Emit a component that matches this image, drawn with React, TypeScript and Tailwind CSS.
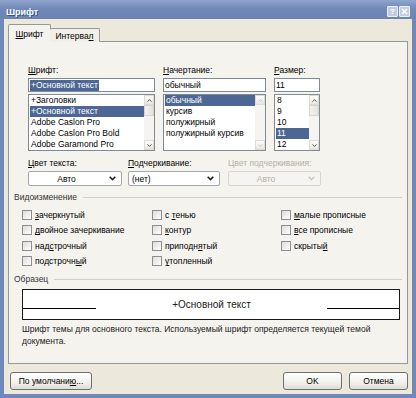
import React from "react";

const SEL = "bg-[#4d6795] text-white";

function U({ children }: { children: React.ReactNode }) {
  return <span className="underline decoration-[1px] underline-offset-[1px]">{children}</span>;
}

function Chevron({ disabled }: { disabled?: boolean }) {
  return (
    <svg width="7" height="5" viewBox="0 0 7 5">
      <path d="M0.7 0.8 L3.5 3.6 L6.3 0.8" fill="none" stroke={disabled ? "#c9c7bf" : "#1e1e1e"} strokeWidth="1.5" />
    </svg>
  );
}

function Arrow({ up, disabled }: { up?: boolean; disabled?: boolean }) {
  return (
    <div className="h-[10px] flex items-center justify-center bg-[linear-gradient(#fdfdfb,#e8e6df)] border border-[#dddbd3]">
      <svg width="5" height="3" viewBox="0 0 5 3">
        <path
          d={up ? "M0.5 2.6 L2.5 0.6 L4.5 2.6" : "M0.5 0.4 L2.5 2.4 L4.5 0.4"}
          fill="none"
          stroke={disabled ? "#cdcbc3" : "#555"}
          strokeWidth="1"
        />
      </svg>
    </div>
  );
}

function ScrollBar({ thumb, disabled }: { thumb?: boolean; disabled?: boolean }) {
  return (
    <div className="w-[10px] flex flex-col bg-[#f5f4f0]">
      <Arrow up disabled={disabled} />
      {thumb && <div className="h-[11px] bg-[linear-gradient(90deg,#f3f2ee,#e4e2da)] border border-[#d6d4cc]" />}
      <div className="flex-1" />
      <Arrow disabled={disabled} />
    </div>
  );
}

function ListBox({ items, sel, thumb, disabled }: { items: string[]; sel: number; thumb?: boolean; disabled?: boolean }) {
  return (
    <div className="h-[57px] border border-[#7f8a99] bg-white flex">
      <div className="flex-1 overflow-hidden pl-[1px]">
        {items.map((t, i) => (
          <div key={i} className={`h-[11px] leading-[11px] pl-[1px] whitespace-nowrap ${i === sel ? SEL : ""}`}>
            {t}
          </div>
        ))}
      </div>
      <ScrollBar thumb={thumb} disabled={disabled} />
    </div>
  );
}

function Field({ children }: { children: React.ReactNode }) {
  return (
    <div className="h-[14px] mt-[2px] mb-[2px] border border-[#7f8a99] bg-white flex items-center pl-[1px] whitespace-nowrap">
      {children}
    </div>
  );
}

function Combo({ text, center, disabled }: { text: string; center?: boolean; disabled?: boolean }) {
  return (
    <div
      className={`h-[15px] mt-[2px] rounded-[2px] border flex items-center ${
        disabled ? "border-[#d7d5cd] bg-[#f5f4f0]" : "border-[#a3a8ae] bg-white"
      }`}
    >
      <div className={`flex-1 ${center ? "text-center" : "pl-[3px]"} ${disabled ? "text-[#b3b0a4]" : ""}`}>{text}</div>
      <div className="w-[17px] flex justify-center">
        <Chevron disabled={disabled} />
      </div>
    </div>
  );
}

function Check({ children }: { children: React.ReactNode }) {
  return (
    <div className="h-[15.5px] flex items-center">
      <div className="w-[10px] h-[10px] border border-[#8b8e92] bg-[linear-gradient(135deg,#dedcd5,#ffffff)]" />
      <span className="ml-[3px]">{children}</span>
    </div>
  );
}

function GroupHead({ title }: { title: string }) {
  return (
    <div className="h-[12px] flex items-center gap-[6px]">
      <span className="text-[#333]">{title}</span>
      <div className="flex-1 h-px bg-[#d3d1c6]" />
    </div>
  );
}

function Button({ children, w }: { children: React.ReactNode; w: string }) {
  return (
    <div
      className={`${w} h-[18px] rounded-[3px] border border-[#6f6f6f] bg-[linear-gradient(#ffffff,#f1f0eb_60%,#dedcd3)] flex items-center justify-center`}
    >
      {children}
    </div>
  );
}

export default function App() {
  return (
    <div className="w-[416px] h-[398px] bg-[#7089b9] flex flex-col font-['Liberation_Sans',Arial,sans-serif] text-[8.5px] leading-[12px] text-black select-none">
      {/* title bar */}
      <div className="h-[19px] pt-[4px] pl-[6px] pr-[6px] flex items-center bg-[linear-gradient(#90a5ce,#7189b9_45%,#6b84b4)]">
        <span className="text-white font-bold text-[9px] [text-shadow:1px_1px_0_#3d5687]">Шрифт</span>
        <div className="flex-1" />
        <div className="w-[11px] h-[11px] rounded-[1px] border border-[#eef1f7] bg-[#c3cde0] flex items-center justify-center text-[8px] font-bold leading-none text-white">
          ?
        </div>
        <div className="w-[11px] h-[11px] ml-[1px] rounded-[1px] border border-[#eef1f7] bg-[#c3cde0] flex items-center justify-center">
          <svg width="7" height="7" viewBox="0 0 7 7">
            <path d="M1 1 L6 6 M6 1 L1 6" stroke="#fff" strokeWidth="1.6" />
          </svg>
        </div>
      </div>

      {/* dialog body */}
      <div className="flex-1 mx-[4px] mb-[4px] bg-[#ece9dc] px-[4px] flex flex-col">
        {/* tabs */}
        <div className="mt-[5px] flex items-end relative z-10 -mb-px">
          <div className="w-[43px] h-[18px] bg-[#f4f3ee] border border-b-0 border-[#919b9c] rounded-t-[2px] flex items-center justify-center">
            <span>
              <U>Ш</U>рифт
            </span>
          </div>
          <div className="w-[50px] h-[14px] -ml-px bg-[#f1efe7] border border-b-0 border-l-0 border-[#919b9c] rounded-t-[2px] flex items-center justify-center">
            <span>
              Интерва<U>л</U>
            </span>
          </div>
        </div>

        {/* tab panel */}
        <div className="w-[400px] h-[323px] bg-[#f4f3ee] border border-[#919b9c] pt-[22px] px-[5px]">
          <div className="ml-[14px] flex gap-[8px]">
            <div className="w-[127px]">
              <div className="h-[12px]">
                <U>Ш</U>рифт:
              </div>
              <Field>
                <span className={`${SEL} px-[1px] leading-[11px]`}>+Основной текст</span>
              </Field>
              <ListBox
                items={["+Заголовки", "+Основной текст", "Adobe Caslon Pro", "Adobe Caslon Pro Bold", "Adobe Garamond Pro"]}
                sel={1}
                thumb
              />
            </div>
            <div className="w-[103px]">
              <div className="h-[12px]">
                <U>Н</U>ачертание:
              </div>
              <Field>обычный</Field>
              <ListBox items={["обычный", "курсив", "полужирный", "полужирный курсив"]} sel={0} disabled />
            </div>
            <div className="w-[46px]">
              <div className="h-[12px]">
                <U>Р</U>азмер:
              </div>
              <Field>11</Field>
              <ListBox items={["8", "9", "10", "11", "12"]} sel={3} thumb />
            </div>
          </div>

          <div className="ml-[14px] mt-[6px] flex">
            <div className="w-[94px]">
              <div className="h-[12px]">
                <U>Ц</U>вет текста:
              </div>
              <Combo text="Авто" center />
            </div>
            <div className="w-[92px] ml-[6px]">
              <div className="h-[12px]">
                <U>П</U>одчеркивание:
              </div>
              <Combo text="(нет)" />
            </div>
            <div className="w-[93px] ml-[8px]">
              <div className="h-[12px] text-[#b3b0a4]">Цвет подчеркивания:</div>
              <Combo text="Авто" center disabled />
            </div>
          </div>

          <div className="mt-[5px]">
            <GroupHead title="Видоизменение" />
          </div>
          <div className="mt-[4px] ml-[8px] grid grid-cols-[130px_129px_1fr]">
            <Check>
              <U>з</U>ачеркнутый
            </Check>
            <Check>
              с <U>т</U>енью
            </Check>
            <Check>
              <U>м</U>алые прописные
            </Check>
            <Check>
              <U>д</U>войное зачеркивание
            </Check>
            <Check>
              <U>к</U>онтур
            </Check>
            <Check>
              <U>в</U>се прописные
            </Check>
            <Check>
              над<U>с</U>трочный
            </Check>
            <Check>
              приподн<U>я</U>тый
            </Check>
            <Check>
              скрыты<U>й</U>
            </Check>
            <Check>
              подстрочн<U>ы</U>й
            </Check>
            <Check>
              <U>у</U>топленный
            </Check>
          </div>

          <div className="mt-[4px]">
            <GroupHead title="Образец" />
          </div>
          <div className="mt-[4px] ml-[8px] w-[378px] h-[31px] border border-[#1a1a1a] bg-white flex items-center">
            <div className="w-[73px] h-px bg-black mt-[7px]" />
            <div className="flex-1 text-center text-[10px] text-[#222]">+Основной текст</div>
            <div className="w-[72px] h-px bg-black mt-[7px]" />
          </div>
          <div className="mt-[3px] ml-[8px] text-[#222]">
            Шрифт темы для основного текста. Используемый шрифт определяется текущей темой
            <br />
            документа.
          </div>
        </div>

        {/* buttons */}
        <div className="mt-[8px] pl-[2px] flex">
          <Button w="w-[82px]">
            <span>
              По умолчани<U>ю</U>...
            </span>
          </Button>
          <div className="flex-1" />
          <Button w="w-[59px]">OK</Button>
          <div className="w-[7px]" />
          <Button w="w-[59px]">Отмена</Button>
        </div>
      </div>
    </div>
  );
}
